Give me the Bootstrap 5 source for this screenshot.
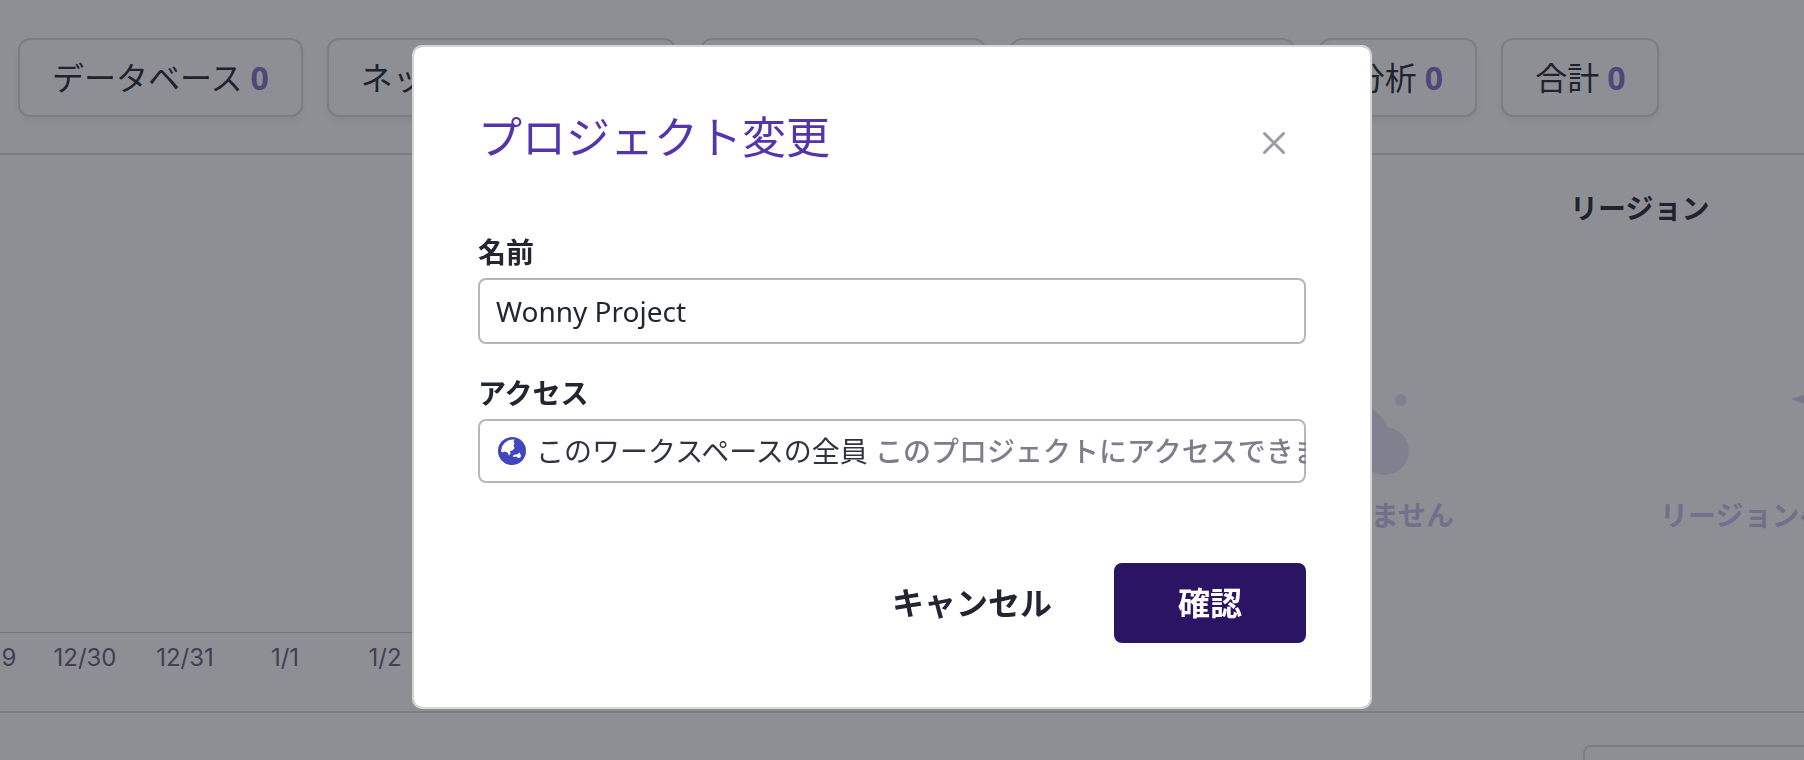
<!DOCTYPE html>
<html lang="ja">
<head>
<meta charset="utf-8">
<meta name="viewport" content="width=device-width, initial-scale=1">
<title>プロジェクト変更</title>
<link rel="stylesheet" href="https://cdn.jsdelivr.net/npm/bootstrap@5.3.0/dist/css/bootstrap.min.css">
<style>
  :root { --ink: #232533; --line: #d9dadd; }
  body { font-family: "Noto Sans", "Noto Sans CJK JP", sans-serif; color: var(--ink); min-height: 100vh; }

  /* Resource counters */
  .summary { padding: 38px 18px 36px; gap: 24px; border-bottom: 2px solid var(--line); }
  .chip { font-size: 32px; line-height: 46px; padding: 15px 32px 14px; border: 2px solid var(--line); border-radius: 12px; box-shadow: 0 4px 8px rgba(0, 0, 0, .06); white-space: nowrap; background: #fff; color: var(--ink); flex: none; }
  .chip b { color: #7c6fcb; margin-left: 8px; }

  /* Dashboard */
  .board { height: 558px; border-bottom: 2px solid var(--line); }
  .axis { padding-bottom: 34px; }
  .ticks { border-top: 1px solid #c8c9cd; font: 24px/38px Inter, sans-serif; color: #62607a; padding-top: 6px; margin-left: -65px; }
  .ticks span { width: 100px; text-align: center; flex: none; }
  .widget { padding-top: 33px; flex: none; }
  .widget h2 { font-size: 28px; line-height: 40px; font-weight: 700; margin: 0 0 162px; }
  .provider { width: 400px; padding-right: 116px; }
  .region { width: 234px; }
  .region .empty { margin-left: 90px; width: max-content; }
  .empty-note { font-size: 28px; line-height: 40px; font-weight: 700; color: #c5c0ea; white-space: nowrap; margin: 15px 0 0; }
  .panel { width: 221px; margin-top: 32px; border: solid var(--line); border-width: 2px 0 0 2px; border-radius: 8px 0 0 0; }

  /* Dialog */
  .modal-backdrop { --bs-backdrop-bg: #1d2029; --bs-backdrop-opacity: .5; }
  .modal { --bs-modal-width: 960px; padding-right: 20px; }
  .modal-dialog { margin-top: 45px; margin-bottom: 0; }
  .modal-content { border: 2px solid #d6d6da; border-radius: 10px; padding: 58px 64px 64px; color: var(--ink); }
  .modal-title { font-size: 44px; line-height: 64px; font-weight: 400; color: #5533ad; }
  .close-btn { border: 0; background: none; padding: 20px 20px 14px; line-height: 0; margin-top: 6px; }
  .form-label { font-size: 28px; line-height: 38px; font-weight: 700; margin-bottom: 7px; display: block; }
  .field { border-radius: 8px; font-size: 28px; color: var(--ink); }
  input.field { height: 66px; border: 2px solid #b7b6bd; padding: 0 16px; }
  button.field { height: 64px; border: 0; box-shadow: inset 0 0 0 2px #b7b6bd; padding: 0 20px; gap: 10px; background: #fff; color: #303240; }
  .hint { color: #7f7d8b; font-weight: 500; }
  .gap-title { margin-top: 64px; }
  .gap-field { margin-top: 30px; }
  .gap-actions { margin-top: 80px; }
  .action { font-size: 32px; line-height: 48px; font-weight: 700; border: 0; border-radius: 8px; padding: 16px 64px; }
  .action-main { background: #2a1463; color: #fff; }
  .action-plain { background: none; color: var(--ink); padding: 16px 0; margin-right: 62px; }
</style>
</head>
<body class="d-flex flex-column">
<nav class="summary d-flex overflow-hidden">
  <button type="button" class="chip">データベース<b>0</b></button>
  <button type="button" class="chip">ネットワーキング<b>0</b></button>
  <button type="button" class="chip">コンテナ管理<b>0</b></button>
  <button type="button" class="chip">セキュリティ<b>0</b></button>
  <button type="button" class="chip">分析<b>0</b></button>
  <button type="button" class="chip">合計<b>0</b></button>
</nav>
<main class="d-flex flex-column flex-grow-1">
  <section class="board d-flex">
    <div class="axis flex-grow-1 d-flex flex-column justify-content-end overflow-hidden">
      <div class="ticks d-flex"><span>12/29</span><span>12/30</span><span>12/31</span><span>1/1</span><span>1/2</span></div>
    </div>
    <div class="widget provider d-flex flex-column align-items-end">
      <h2 class="align-self-start">サービス</h2>
      <svg width="130" height="90" viewBox="0 0 130 90" fill="#e4e1f2" aria-hidden="true"><circle cx="30" cy="50" r="36"/><circle cx="61" cy="61" r="24"/><circle cx="77" cy="10" r="6"/></svg>
      <p class="empty-note">サービスがありません</p>
    </div>
    <div class="widget region overflow-hidden">
      <h2>リージョン</h2>
      <div class="empty d-flex flex-column align-items-center">
        <svg width="48" height="90" viewBox="0 0 48 90" fill="#d1cee8" aria-hidden="true"><path d="M1 9 48-6V26Z"/></svg>
        <p class="empty-note">リージョンへの接続なし</p>
      </div>
    </div>
  </section>
  <section class="panel ms-auto flex-grow-1"></section>
</main>

<div class="modal-backdrop show"></div>
<div class="modal d-block" tabindex="-1" role="dialog" aria-labelledby="dialogTitle">
  <div class="modal-dialog">
    <form class="modal-content">
      <div class="d-flex justify-content-between align-items-start">
        <h1 class="modal-title" id="dialogTitle">プロジェクト変更</h1>
        <button type="button" class="close-btn" aria-label="閉じる"><svg width="24" height="24" viewBox="0 0 24 24" stroke="#9a9ba5" stroke-width="3" stroke-linecap="round"><path d="M2.500 2.500 21.500 21.500M21.500 2.500 2.500 21.500"/></svg></button>
      </div>
      <div class="gap-title">
        <label class="form-label" for="name">名前</label>
        <input type="text" class="field w-100 d-block" id="name" value="Wonny Project">
      </div>
      <div class="gap-field">
        <label class="form-label" for="access">アクセス</label>
        <button type="button" class="field w-100 d-flex align-items-center overflow-hidden text-nowrap" id="access">
          <svg class="flex-shrink-0" width="28" height="28" viewBox="0 0 28 28" aria-hidden="true"><circle cx="14" cy="14" r="14" fill="#4146bd"/><path fill="#fff" d="M3 14.500 4 9.500 6.500 6 10 3.500 14 2.500 16.500 2.500 15.500 4.500 16.500 6.500 15.500 8.500 16.500 11 14.500 13.500 12 14 12.500 16.500 11 18.500 9.500 15.500 6.500 14.500 4.500 15.500ZM14.500 19 17 17.500 19 17.500 21.500 15.500 23 18.500 22.500 20.500 20 21 18.500 19.500 16 20Z"/></svg>
          <span>このワークスペースの全員 <span class="hint">このプロジェクトにアクセスできます</span></span>
        </button>
      </div>
      <div class="gap-actions d-flex justify-content-end">
        <button type="button" class="action action-plain">キャンセル</button>
        <button type="submit" class="action action-main">確認</button>
      </div>
    </form>
  </div>
</div>
<script src="https://cdn.jsdelivr.net/npm/bootstrap@5.3.0/dist/js/bootstrap.bundle.min.js"></script>
</body>
</html>
